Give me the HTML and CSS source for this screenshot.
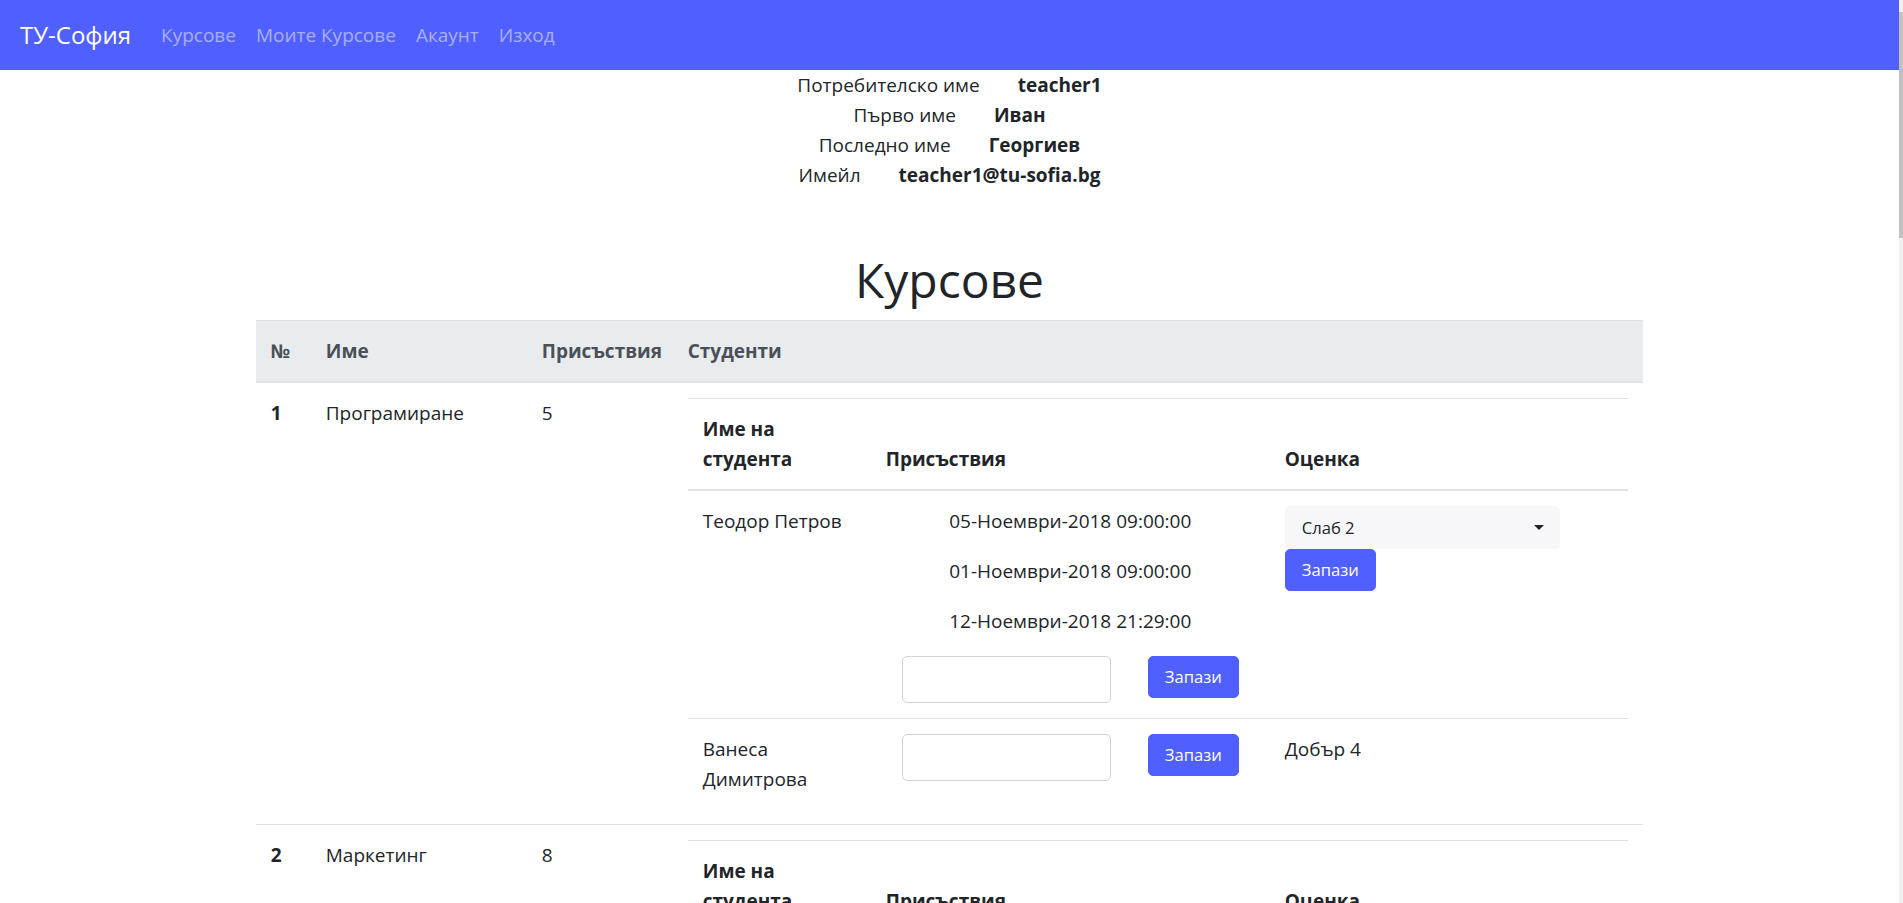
FILE: index.html
```html
<!DOCTYPE html>
<html lang="bg">
<head>
<meta charset="utf-8">
<title>Курсове</title>
<link rel="stylesheet" href="styles.css">
</head>
<body>
<nav class="navbar">
  <a class="brand" href="#">ТУ-София</a>
  <ul class="nav">
    <li><a href="#">Курсове</a></li>
    <li><a href="#">Моите Курсове</a></li>
    <li><a href="#">Акаунт</a></li>
    <li><a href="#">Изход</a></li>
  </ul>
</nav>
<main class="container">
  <section class="profile">
    <div class="profile-row"><span class="label">Потребителско име</span><span class="value">teacher1</span></div>
    <div class="profile-row"><span class="label">Първо име</span><span class="value">Иван</span></div>
    <div class="profile-row"><span class="label">Последно име</span><span class="value">Георгиев</span></div>
    <div class="profile-row"><span class="label">Имейл</span><span class="value">teacher1@tu-sofia.bg</span></div>
  </section>

  <h1 class="title">Курсове</h1>

  <table class="table courses">
    <colgroup>
      <col class="col-num"><col class="col-name"><col class="col-att"><col>
    </colgroup>
    <thead>
      <tr><th>№</th><th>Име</th><th>Присъствия</th><th>Студенти</th></tr>
    </thead>
    <tbody>
      <tr>
        <th class="row-num">1</th>
        <td>Програмиране</td>
        <td>5</td>
        <td>
          <table class="table students">
            <colgroup><col class="col-student"><col class="col-presence"><col></colgroup>
            <thead>
              <tr><th>Име на студента</th><th>Присъствия</th><th>Оценка</th></tr>
            </thead>
            <tbody>
              <tr>
                <td>Теодор Петров</td>
                <td>
                  <div class="presence">
                    <p class="date">05-Ноември-2018 09:00:00</p>
                    <p class="date">01-Ноември-2018 09:00:00</p>
                    <p class="date">12-Ноември-2018 21:29:00</p>
                    <form class="presence-form">
                      <input class="input" type="text">
                      <button class="btn" type="button">Запази</button>
                    </form>
                  </div>
                </td>
                <td>
                  <div class="select-wrap">
                    <select class="select"><option>Слаб 2</option></select>
                  </div>
                  <button class="btn" type="button">Запази</button>
                </td>
              </tr>
              <tr>
                <td>Ванеса Димитрова</td>
                <td>
                  <div class="presence">
                    <form class="presence-form">
                      <input class="input" type="text">
                      <button class="btn" type="button">Запази</button>
                    </form>
                  </div>
                </td>
                <td>Добър 4</td>
              </tr>
            </tbody>
          </table>
        </td>
      </tr>
      <tr>
        <th class="row-num">2</th>
        <td>Маркетинг</td>
        <td>8</td>
        <td>
          <table class="table students">
            <colgroup><col class="col-student"><col class="col-presence"><col></colgroup>
            <thead>
              <tr><th>Име на студента</th><th>Присъствия</th><th>Оценка</th></tr>
            </thead>
          </table>
        </td>
      </tr>
    </tbody>
  </table>
</main>
<div class="scrollbar" aria-hidden="true"><div class="scrollbar-thumb"></div></div>
</body>
</html>
```
FILE: styles.css
```css
html {
  background: #fff;
  scrollbar-width: none;
}

body {
  margin: 0;
  padding-right: 4px;
  font-family: "Open Sans", "Noto Sans", sans-serif;
  font-size: 19px;
  line-height: 30px;
  color: #212529;
}

a {
  text-decoration: none;
}

/* fake browser scrollbar */
.scrollbar {
  position: fixed;
  top: 0;
  right: 0;
  width: 4px;
  height: 100vh;
  box-sizing: border-box;
  padding-top: 12px;
  background: #f1f1f1;
}

.scrollbar-thumb {
  height: 226px;
  background: #c1c1c1;
}

/* navbar */
.navbar {
  display: flex;
  align-items: center;
  height: 70px;
  box-sizing: border-box;
  padding: 10px 20px;
  background: #5060ff;
}

.brand {
  font-size: 24px;
  line-height: 37.5px;
  padding: 6px 0;
  margin-right: 20px;
  color: #fff;
}

.nav {
  display: flex;
  list-style: none;
  margin: 0;
  padding: 0;
}

.nav a {
  display: block;
  padding: 10px;
  color: rgba(255, 255, 255, 0.5);
}

/* container */
.container {
  max-width: 1425px;
  box-sizing: border-box;
  margin: 0 auto;
  padding: 0 18.75px;
}

/* profile */
.profile {
  display: flex;
  flex-direction: column;
  align-items: center;
}

.profile-row {
  display: flex;
  justify-content: center;
  gap: 38px;
}

.value {
  font-weight: 700;
}

.title {
  margin: 60px 0 10px;
  font-size: 48px;
  line-height: 60px;
  font-weight: 500;
  text-align: center;
}

/* tables */
.table {
  width: 100%;
  border-collapse: collapse;
  table-layout: fixed;
}

.table th,
.table td {
  padding: 15px;
  text-align: left;
  vertical-align: top;
  border-top: 1px solid #dee2e6;
}

.table thead th {
  vertical-align: bottom;
  border-bottom: 2px solid #dee2e6;
  font-weight: 700;
}

.courses > thead th {
  background: #e9ecef;
  color: #495057;
}

.row-num {
  font-weight: 700;
}

.col-num { width: 55px; }
.col-name { width: 216px; }
.col-att { width: 146px; }
.col-student { width: 183px; }
.col-presence { width: 399px; }

/* presence cell */
.presence {
  display: flex;
  flex-direction: column;
  align-items: center;
}

.date {
  margin: 0 0 20px;
}

.presence-form {
  display: flex;
  align-items: flex-start;
  gap: 37px;
  margin: 0;
}

.input {
  width: 209px;
  height: 47px;
  box-sizing: border-box;
  border: 1px solid #ced4da;
  border-radius: 5px;
  padding: 7px 15px;
  font: inherit;
  background: #fff;
}

.btn {
  display: inline-block;
  font-family: inherit;
  font-size: 16.6px;
  line-height: 26px;
  padding: 7px 16px;
  color: #fff;
  background: #5060ff;
  border: 1px solid #5060ff;
  border-radius: 5px;
}

/* grade select */
.select-wrap {
  position: relative;
  width: 275px;
}

.select-wrap::after {
  content: "";
  position: absolute;
  right: 16px;
  top: 19px;
  border-left: 5.5px solid transparent;
  border-right: 5.5px solid transparent;
  border-top: 5.5px solid #212529;
  pointer-events: none;
}

.select {
  display: block;
  width: 100%;
  height: 43px;
  appearance: none;
  -webkit-appearance: none;
  border: none;
  border-radius: 5px;
  background: #f7f7f9;
  padding: 0 17px;
  font-family: inherit;
  font-size: 16.6px;
  color: #212529;
}
```
